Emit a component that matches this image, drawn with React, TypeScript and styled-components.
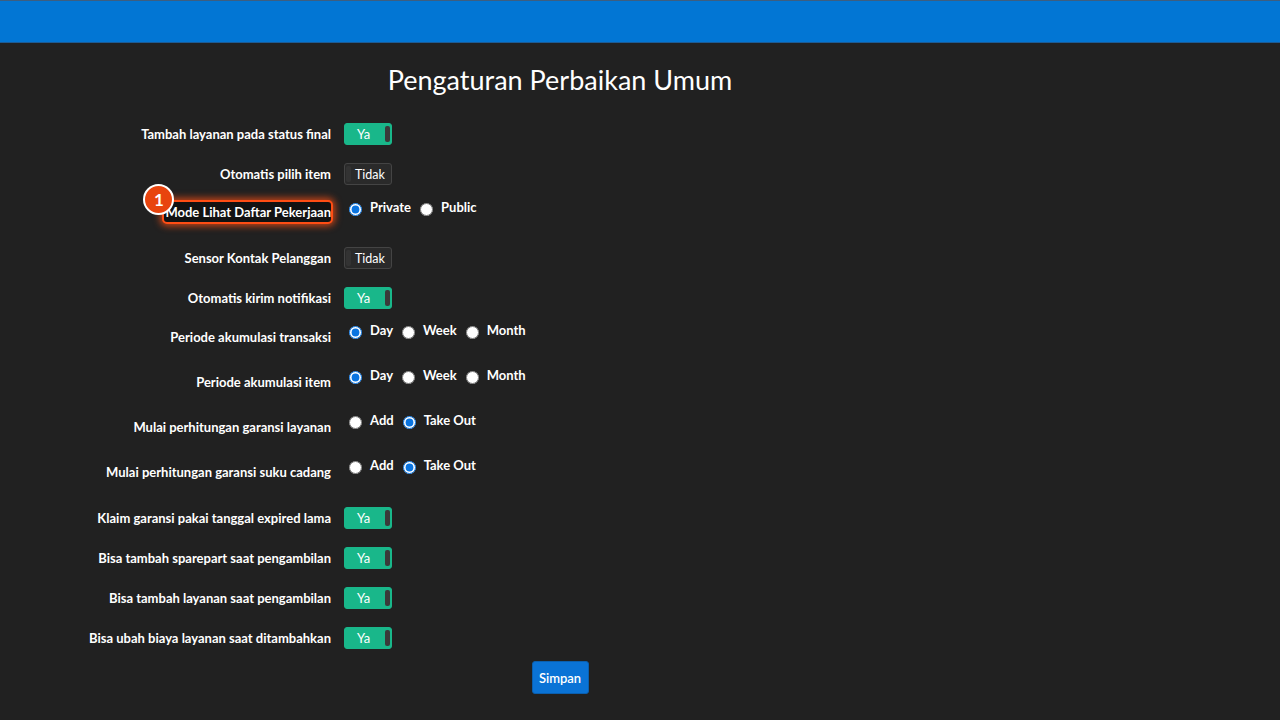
import React from 'react';
import styled, { createGlobalStyle } from 'styled-components';

const GlobalStyle = createGlobalStyle`
  html, body {
    margin: 0;
    padding: 0;
    background: #212121;
    font-family: Lato, "Open Sans", sans-serif;
    color: #fff;
  }
`;

const Page = styled.div`
  width: 1280px;
  height: 720px;
  overflow: hidden;
  background: #212121;
`;

const TopBar = styled.header`
  height: 41px;
  background: #0276d4;
  border-top: 1px solid #3d5e80;
  border-bottom: 1px solid #1d5b94;
`;

const Main = styled.main`
  width: 1120px;
  display: flex;
  flex-direction: column;
`;

const Title = styled.h1`
  margin: 21px 0 27px;
  text-align: center;
  font-size: 27px;
  font-weight: 400;
  line-height: 32px;
  color: #fff;
`;

const Form = styled.form`
  display: flex;
  flex-direction: column;
`;

const Row = styled.div<{ $mb: number; $align?: string }>`
  display: grid;
  grid-template-columns: 331px auto;
  column-gap: 13px;
  align-items: ${({ $align }) => $align || 'center'};
  margin-bottom: ${({ $mb }) => $mb}px;
`;

const Label = styled.label<{ $pt?: number }>`
  justify-self: end;
  font-size: 13px;
  font-weight: 700;
  line-height: 16px;
  padding-top: ${({ $pt }) => $pt || 0}px;
  color: #fff;
  white-space: nowrap;
`;

const Highlight = styled.span`
  position: relative;
  display: inline-block;
  margin-right: -2px;
  padding: 2px 0 2px 1px;
  border: 2px solid #ff4d14;
  border-radius: 5px;
  background: #121212;
  box-shadow: 0 0 7px 2px rgba(255, 80, 20, 0.75);
`;

const StepBadge = styled.span`
  position: absolute;
  left: -21px;
  top: -18px;
  width: 27px;
  height: 27px;
  border-radius: 50%;
  background: #e8440e;
  border: 2px solid #fff;
  color: #fff;
  font-size: 17px;
  font-weight: 700;
  line-height: 27px;
  text-align: center;
`;

const Toggle = styled.div<{ $on: boolean }>`
  position: relative;
  box-sizing: border-box;
  width: 48px;
  height: 22px;
  border-radius: 3px;
  background: ${({ $on }) => ($on ? '#19b78a' : '#2a2a2a')};
  border: 1px solid ${({ $on }) => ($on ? '#19b78a' : '#444')};
  font-size: ${({ $on }) => ($on ? '13px' : '12.5px')};
  line-height: 21px;
  color: #fff;
  padding-left: ${({ $on }) => ($on ? '12px' : '10px')};
  &::after {
    content: '';
    position: absolute;
    top: 2px;
    bottom: 2px;
    width: 5px;
    border-radius: 2px;
    background: ${({ $on }) => ($on ? '#3a3a3a' : '#333')};
    ${({ $on }) => ($on ? 'right: 1px;' : 'left: 1px;')}
  }
`;

const RadioGroup = styled.div`
  display: flex;
  align-items: center;
  height: 16px;
  margin-top: 1px;
`;

const RadioOption = styled.label`
  display: flex;
  align-items: center;
  font-size: 13px;
  font-weight: 700;
  color: #fff;
  margin-right: 4px;
  input {
    margin: 0 8px 0 5px;
    width: 13px;
    height: 13px;
    accent-color: #0a74e0;
  }
  span {
    position: relative;
    top: -2px;
  }
`;

const Footer = styled.div`
  display: flex;
  justify-content: center;
  margin-top: 12px;
`;

const SaveButton = styled.button`
  width: 57px;
  height: 33px;
  border-radius: 3px;
  border: 1px solid #0b5fae;
  background: #0a73d6;
  color: #fff;
  font-family: Lato, sans-serif;
  font-size: 13px;
  font-weight: 600;
`;

type Item =
  | { kind: 'toggle'; label: string; on: boolean; mb: number }
  | { kind: 'radio'; label: string; options: string[]; value: string; mb: number; pt: number; highlight?: boolean };

const items: Item[] = [
  { kind: 'toggle', label: 'Tambah layanan pada status final', on: true, mb: 18 },
  { kind: 'toggle', label: 'Otomatis pilih item', on: false, mb: 15 },
  { kind: 'radio', label: 'Mode Lihat Daftar Pekerjaan', options: ['Private', 'Public'], value: 'Private', mb: 23, pt: 0, highlight: true },
  { kind: 'toggle', label: 'Sensor Kontak Pelanggan', on: false, mb: 18 },
  { kind: 'toggle', label: 'Otomatis kirim notifikasi', on: true, mb: 14 },
  { kind: 'radio', label: 'Periode akumulasi transaksi', options: ['Day', 'Week', 'Month'], value: 'Day', mb: 23, pt: 6 },
  { kind: 'radio', label: 'Periode akumulasi item', options: ['Day', 'Week', 'Month'], value: 'Day', mb: 23, pt: 6 },
  { kind: 'radio', label: 'Mulai perhitungan garansi layanan', options: ['Add', 'Take Out'], value: 'Take Out', mb: 23, pt: 6 },
  { kind: 'radio', label: 'Mulai perhitungan garansi suku cadang', options: ['Add', 'Take Out'], value: 'Take Out', mb: 27, pt: 6 },
  { kind: 'toggle', label: 'Klaim garansi pakai tanggal expired lama', on: true, mb: 18 },
  { kind: 'toggle', label: 'Bisa tambah sparepart saat pengambilan', on: true, mb: 18 },
  { kind: 'toggle', label: 'Bisa tambah layanan saat pengambilan', on: true, mb: 18 },
  { kind: 'toggle', label: 'Bisa ubah biaya layanan saat ditambahkan', on: true, mb: 0 },
];

export default function App() {
  return (
    <Page>
      <GlobalStyle />
      <TopBar />
      <Main>
        <Title>Pengaturan Perbaikan Umum</Title>
        <Form onSubmit={(e) => e.preventDefault()}>
          {items.map((item, i) =>
            item.kind === 'toggle' ? (
              <Row key={i} $mb={item.mb}>
                <Label>{item.label}</Label>
                <Toggle $on={item.on}>{item.on ? 'Ya' : 'Tidak'}</Toggle>
              </Row>
            ) : (
              <Row key={i} $mb={item.mb} $align="start">
                <Label $pt={item.pt}>
                  {item.highlight ? (
                    <Highlight>
                      <StepBadge>1</StepBadge>
                      {item.label}
                    </Highlight>
                  ) : (
                    item.label
                  )}
                </Label>
                <RadioGroup>
                  {item.options.map((opt) => (
                    <RadioOption key={opt}>
                      <input type="radio" name={`r${i}`} defaultChecked={opt === item.value} />
                      <span>{opt}</span>
                    </RadioOption>
                  ))}
                </RadioGroup>
              </Row>
            )
          )}
          <Footer>
            <SaveButton type="submit">Simpan</SaveButton>
          </Footer>
        </Form>
      </Main>
    </Page>
  );
}
